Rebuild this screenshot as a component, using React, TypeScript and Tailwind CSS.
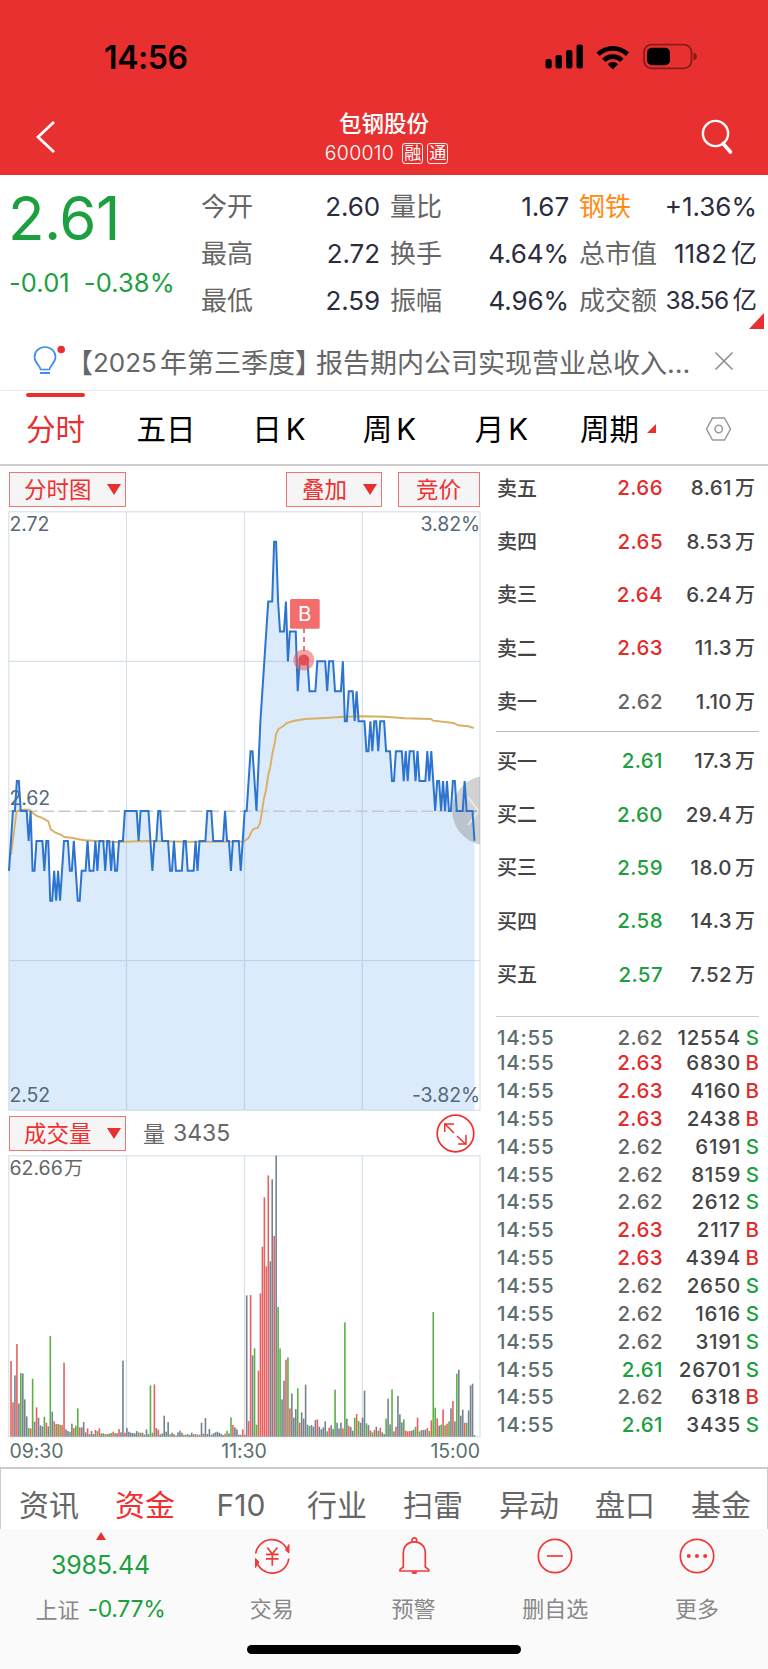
import React from "react";

const FONT =
  "font-[Inter,'Noto_Sans_CJK_SC',sans-serif]";

// price in ticks relative to yesterday's close (2.62), as [minute, ticks]
const PRICE: number[][] = [
  [0, -2], [2, 0], [3, 0], [4, 1], [5, 1], [6, 0], [9, 0], [10, -1], [11, 0], [12, -2],
  [13, -2], [14, -1], [17, -1], [18, -2], [19, -1], [20, -1], [21, -3], [22, -3], [23, -2], [24, -3],
  [25, -2], [26, -3], [28, -1], [30, -1], [31, -2], [32, -2], [33, -1], [35, -3], [36, -3], [37, -2],
  [39, -2], [40, -1], [41, -2], [43, -2], [44, -1], [45, -2], [46, -1], [48, -1], [49, -2], [50, -1],
  [51, -1], [52, -2], [53, -1], [54, -2], [55, -2], [56, -1], [58, -1], [59, 0], [65, 0], [66, -1],
  [67, 0], [71, 0], [73, -2], [74, -1], [75, -1], [76, 0], [77, 0], [78, -1], [81, -1], [82, -2],
  [83, -2], [84, -1], [85, -2], [88, -2], [89, -1], [90, -1], [91, -2], [94, -2], [95, -1], [96, -2],
  [97, -1], [100, -1], [101, 0], [103, 0], [104, -1], [109, -1], [110, 0], [111, -1], [112, -1], [113, -2],
  [114, -1], [117, -1], [118, -2], [120, 0], [121, 0], [123, 2], [124, 2], [126, 0], [128, 3], [130, 5],
  [132, 7], [134, 7], [135, 9], [136, 9], [137, 7], [138, 6], [140, 6], [141, 7], [142, 5], [143, 6],
  [146, 6], [147, 4], [148, 5], [152, 5], [153, 4], [156, 4], [157, 5], [161, 5], [162, 4], [163, 5],
  [165, 5], [166, 4], [169, 4], [170, 5], [171, 3], [172, 3], [173, 4], [175, 4], [176, 3], [177, 4],
  [178, 3], [181, 3], [182, 2], [183, 2], [184, 3], [185, 2], [186, 3], [187, 3], [188, 2], [189, 3],
  [191, 3], [192, 2], [194, 2], [195, 1], [196, 1], [197, 2], [200, 2], [201, 1], [202, 2], [203, 1],
  [204, 2], [206, 2], [207, 1], [208, 2], [209, 1], [212, 1], [213, 2], [214, 1], [215, 2], [217, 0],
  [218, 1], [219, 1], [220, 0], [221, 1], [222, 0], [223, 1], [224, 0], [225, 0], [226, 1], [227, 1],
  [228, 0], [231, 0], [232, 1], [233, 0], [236, 0], [237, -1],
];

const AVERAGE =
  "11,855 16.5,812 18.5,810.5 25,809.5 30,810 32.5,812.7 36.7,816 41.7,817.7 48.3,821.3 50.7,829.3 55,832.3 61.7,835 64.3,837 73.3,838 78.3,839.3 85,840.3 100,841.3 117,842 147,841 187,841.7 244,841.5 246.7,839.3 248.7,838 250.7,833.3 253.3,829 257.7,828 260,823.3 262,811.7 264,798.3 266,790 268.3,775 270.3,766.7 272.3,754 275,741.7 276,734.3 278.3,729.3 283.3,726 286.7,723 293.3,721 305,719 325,718 345,716.7 362,716.3 385,716.7 405,718.3 430.7,719 433.3,720.7 453.3,723 458.3,725.3 468.3,726.3 473.7,728";

// one bar per minute: r = up, g = down, k = flat
const VOLUME =
  "r227 r103 k184 r278 k100 g191 k190 k112 k61 g26 r25 g174 k45 r88 k57 k34 k31 g60 r42 k31 g302 k75 r46 g38 r38 g36 r35 r222 k22 k17 g14 k39 r26 g33 g85 r28 k28 k44 k13 r25 k8 k17 k8 r20 g17 r25 k10 k10 g8 r8 k9 g11 r15 g11 k10 r23 k13 k228 r12 k26 k15 k12 k11 k10 k17 g13 r12 k12 k6 k22 k8 g154 g12 r157 k26 r21 k7 g10 k63 k15 k44 g7 k12 r8 g4 k13 k18 k12 r6 g6 g8 k5 k12 k7 r8 g6 r6 k42 k9 k56 k8 k23 g6 k10 k13 k15 k12 k9 k5 r9 g18 k10 g58 r35 k28 k22 k6 g6 r22 r6 " +
  "k424 r47 r425 k244 g265 g36 r198 r430 r570 r718 r511 r784 k526 k772 r602 k843 g389 g265 k112 k168 r231 g238 r85 k130 k57 k83 g145 r42 k73 k54 k156 k36 g32 k35 k30 k50 r52 k30 k22 k28 k46 g16 r27 k34 k23 g141 k42 k25 k42 r25 g343 k54 r33 k29 k18 g57 r68 g47 k42 k57 k138 g40 k35 r19 g13 r20 k30 g18 r27 k13 k8 g54 k114 k37 g142 k16 r30 k122 k67 k43 g52 r18 r16 r17 k18 k21 g30 r57 g16 k20 k20 k21 r26 g17 r49 g374 g87 r55 k33 g36 r82 g34 r39 g46 k85 r107 k46 g189 k201 k63 k81 r42 g42 k79 k154 k159 g5";

const BAR_COLORS: Record<string, string> = {
  r: "#e8605f",
  g: "#5bb048",
  k: "#74838f",
};

const STATS = [
  ["今开", "2.60", "量比", "1.67", "钢铁", "+1.36%"],
  ["最高", "2.72", "换手", "4.64%", "总市值", "1182亿"],
  ["最低", "2.59", "振幅", "4.96%", "成交额", "38.56亿"],
];

const SELLS = [
  ["卖五", "2.66", "8.61万"],
  ["卖四", "2.65", "8.53万"],
  ["卖三", "2.64", "6.24万"],
  ["卖二", "2.63", "11.3万"],
  ["卖一", "2.62", "1.10万"],
];

const BUYS = [
  ["买一", "2.61", "17.3万"],
  ["买二", "2.60", "29.4万"],
  ["买三", "2.59", "18.0万"],
  ["买四", "2.58", "14.3万"],
  ["买五", "2.57", "7.52万"],
];

const TRADES = [
  ["2.62", "12554", "S"],
  ["2.63", "6830", "B"],
  ["2.63", "4160", "B"],
  ["2.63", "2438", "B"],
  ["2.62", "6191", "S"],
  ["2.62", "8159", "S"],
  ["2.62", "2612", "S"],
  ["2.63", "2117", "B"],
  ["2.63", "4394", "B"],
  ["2.62", "2650", "S"],
  ["2.62", "1616", "S"],
  ["2.62", "3191", "S"],
  ["2.61", "26701", "S"],
  ["2.62", "6318", "B"],
  ["2.61", "3435", "S"],
];

const priceColor = (price: string) => {
  if (price > "2.62") return "text-[#e32b2b]";
  if (price < "2.62") return "text-[#1c9f3f]";
  return "text-[#666]";
};

const withUnit = (value: string) => {
  const unit = value.slice(-1);
  if (unit !== "万" && unit !== "亿") return value;
  return (
    <>
      {value.slice(0, -1)}
      <span className="ml-[4px] tracking-normal">{unit}</span>
    </>
  );
};

const StatusBar = () => (
  <div className="flex h-[114px] items-center justify-between pl-[104px] pr-[70px]">
    <span className="mt-[2px] text-[32px] font-semibold leading-none tracking-[-0.4px] text-black">
      14:56
    </span>
    <svg width="154" height="28" viewBox="544 43 154 28" fill="#000">
      <rect x="545.5" y="59" width="6.2" height="9.5" rx="2" />
      <rect x="555.5" y="55" width="6.4" height="13.5" rx="2" />
      <rect x="566" y="50" width="6.4" height="18.5" rx="2" />
      <rect x="576.5" y="44.5" width="6.4" height="24" rx="2" />
      <path d="M596.5 52.5a23.6 23.6 0 0 1 32.6 0l-3.2 3.6a18.6 18.6 0 0 0-26.2 0z" />
      <path d="M602 58.7a15.6 15.6 0 0 1 21.6 0l-3.4 3.4a10.6 10.6 0 0 0-14.8 0z" />
      <path d="M607.6 64.2a7.5 7.5 0 0 1 10.4 0l-5.2 5z" />
      <rect x="644" y="44.7" width="47.5" height="23.6" rx="7.5" fill="none" stroke="#000" strokeOpacity=".42" strokeWidth="1.8" />
      <rect x="647" y="47.7" width="23" height="17.6" rx="5" />
      <path d="M693.6 52.5c4.4 1.6 4.4 6.4 0 8z" fillOpacity=".45" />
    </svg>
  </div>
);

const Header = () => (
  <header className="h-[175px] bg-[#e93030] text-white">
    <StatusBar />
    <div className="flex items-start justify-between pl-[34px] pr-[33px]">
      <svg className="mt-[6px]" width="24" height="34" viewBox="34 120 24 34" fill="none" stroke="#fff" strokeWidth="2.8">
        <path d="M54 122L38 137l16 15" />
      </svg>
      <div className="ml-[14px] flex flex-col items-center">
        <span className="mr-[5px] text-[22.5px] font-medium leading-[20px]">包钢股份</span>
        <span className="mt-[9px] flex h-[21px] items-center gap-1 text-[19.5px] leading-none">
          <span className="mr-[4px] font-[350] tracking-[0.3px]">600010</span>
          {["融", "通"].map((tag) => (
            <span
              key={tag}
              className="flex h-[21px] w-[21px] items-center justify-center rounded-[3px] border border-white/90 text-[17px] leading-none"
            >
              {tag}
            </span>
          ))}
        </span>
      </div>
      <svg className="mt-[5px]" width="34" height="36" viewBox="700 119 34 36" fill="none" stroke="#fff">
        <circle cx="714.5" cy="133.5" r="12.6" strokeWidth="2.4" />
        <path d="M722 143.5l7.5 8.5" strokeWidth="3.6" strokeLinecap="round" />
      </svg>
    </div>
  </header>
);

const Quote = () => (
  <section className="relative flex h-[157px] text-[26px] leading-none">
    <div className="w-[201px] pl-[9px] text-[#1c9f3f]">
      <div className="mt-[13px] -ml-px text-[60px] leading-[60px] tracking-[-0.5px]">2.61</div>
      <div className="mt-[22px] flex gap-[14px] text-[25.5px] tracking-[0.1px]">
        <span>-0.01</span>
        <span>-0.38%</span>
      </div>
    </div>
    <div className="flex w-[556px] flex-col pt-[8px]">
      {STATS.map((row) => (
        <div key={row[0]} className="flex h-[47px] items-center text-[#2b2d3f]">
          <span className="w-[52px] shrink-0 text-[#666]">{row[0]}</span>
          <span className="w-[127px] shrink-0 text-right tracking-[-0.1px]">{row[1]}</span>
          <span className="ml-[10px] w-[52px] shrink-0 text-[#666]">{row[2]}</span>
          <span className="w-[127px] shrink-0 text-right tracking-[-0.1px]">{row[3]}</span>
          <span
            className={`ml-[10px] shrink-0 ${row[4] === "钢铁" ? "text-[#ff8c14]" : "text-[#666]"}`}
          >
            {row[4]}
          </span>
          <span
            className={`flex-1 whitespace-nowrap text-right ${
              row[5] === "38.56亿" ? "text-[24.5px] tracking-[-0.7px]" : "tracking-[0px]"
            }`}
          >
            {withUnit(row[5])}
          </span>
        </div>
      ))}
    </div>
    <svg className="absolute right-[4px] top-[138px]" width="15" height="16" viewBox="0 0 15 16">
      <path d="M15 0v16H0z" fill="#e93030" />
    </svg>
  </section>
);

const News = () => (
  <section className="flex h-[59px] items-center border-b border-[#e8e8e8] pl-[32px] text-[27px] leading-none text-[#666]">
    <svg width="34" height="34" viewBox="32 345 34 34" fill="none" stroke="#3f8cf5" strokeWidth="1.7">
      <path d="M40.5 370.5c0-4-6-6-6-12.5a10.5 10 0 0 1 21 0c0 6.5-6 8.5-6 12.5z" />
      <path d="M40 374h10" strokeWidth="2" />
      <circle cx="61.2" cy="350.5" r="3.8" fill="#e93030" stroke="none" />
    </svg>
    <span className="mt-[4px] flex w-[624px] whitespace-nowrap">
      <span>【</span>
      <span className="text-[26px]">2025</span>
      <span className="ml-[3px]">年第三季度】</span>
      <span className="-ml-[6px]">报告期内公司实现营业总收入...</span>
    </span>
    <svg className="ml-[24px]" width="20" height="20" viewBox="0 0 20 20" stroke="#888" strokeWidth="1.5">
      <path d="M1.5 1.5l17 17M18.5 1.5l-17 17" />
    </svg>
  </section>
);

const PeriodTabs = () => (
  <nav className="flex h-[75px] border-b-2 border-[#ccc] text-[29.5px] leading-none text-black">
    <div className="flex w-[111px] flex-col items-center text-[#e93030]">
      <span className="mt-[2px] h-[4px] w-[59px] rounded-full bg-[#e93030]" />
      <span className="mt-[18px]">分时</span>
    </div>
    <span className="mt-[24px] w-[110px] text-center">五日</span>
    <span className="mt-[24px] w-[116px] text-center">日<span className="ml-[4px]">K</span></span>
    <span className="mt-[24px] w-[105px] text-center">周<span className="ml-[4px]">K</span></span>
    <span className="mt-[24px] w-[119px] text-center">月<span className="ml-[4px]">K</span></span>
    <span className="mt-[24px] ml-[19px] flex">
      周期
      <svg className="ml-[8px] mt-[9px]" width="9" height="9" viewBox="0 0 9 9">
        <path d="M9 0v9H0z" fill="#e93030" />
      </svg>
    </span>
    <svg className="ml-[49px] mt-[25px]" width="28" height="26" viewBox="0 0 28 26" fill="none" stroke="#999" strokeWidth="1.5">
      <path d="M7.5 2h12l6 11-6 11h-12L1.5 13z" />
      <circle cx="13.7" cy="13" r="3.7" />
    </svg>
  </nav>
);

interface BoxButtonProps {
  label: string;
  className: string;
  arrow?: boolean;
}

const BoxButton: React.FC<BoxButtonProps> = ({ label, className, arrow }) => (
  <button
    className={`flex h-[35px] items-center border border-[#f07676] bg-[#f5f5f5] text-[22.5px] leading-none text-[#f03030] ${className}`}
  >
    <span className="mt-[2px]">{label}</span>
    {arrow && (
      <svg className="ml-auto mr-[4px]" width="14" height="11" viewBox="0 0 14 11">
        <path d="M0 0h14L7 11z" fill="#e93030" />
      </svg>
    )}
  </button>
);

const minuteX = (minute: number) => 9 + minute * 1.964;
const tickY = (ticks: number) => 811 - ticks * 29.93;

const PriceChart = () => {
  const line = PRICE.map(([m, t]) => `${minuteX(m)},${tickY(t)}`).join(" ");
  return (
    <svg className="block" width="486" height="602" viewBox="0 510 486 602" fill="none">
      <g stroke="#d6e1ec" strokeWidth="1.2">
        <rect x="8.8" y="511.8" width="471.2" height="598.5" />
        <path d="M9 661.3h471M9 960.6h471M126.5 512v598M244.5 512v598M362.3 512v598" />
      </g>
      <polygon points={`9,1110 ${line} ${minuteX(237)},1110`} fill="#5aa2ee" fillOpacity=".22" />
      <path d="M9 811.2h471" stroke="#c6c8cc" strokeWidth="1.5" strokeDasharray="12 4.5" />
      <g fill="#566878" fontSize="19.5" letterSpacing="-.1">
        <text x="9.5" y="530.5">2.72</text>
        <text x="9.5" y="804.5">2.62</text>
        <text x="9.5" y="1101.5">2.52</text>
        <text x="480" y="530.5" textAnchor="end">3.82%</text>
        <text x="480" y="1101.5" textAnchor="end">-3.82%</text>
      </g>
      <polyline points={AVERAGE} stroke="#d9b063" strokeWidth="1.9" />
      <path d="M480 776.5a34.7 34.7 0 0 0 0 68z" fill="#777" fillOpacity=".33" />
      <path d="M468 797l10.5 14-10.5 14" stroke="#fff" strokeOpacity=".55" strokeWidth="2" />
      <polyline points={line} stroke="#2c74cf" strokeWidth="2" />
      <path d="M304 628v24" stroke="#e14a50" strokeWidth="1.5" strokeDasharray="5 4" />
      <circle cx="303.8" cy="660" r="10.5" fill="#e8575c" fillOpacity=".55" />
      <circle cx="303.8" cy="660" r="5.5" fill="#df5054" />
      <rect x="290" y="599" width="29.7" height="29.7" rx="1.5" fill="#f36d6d" />
      <text x="304.8" y="621" textAnchor="middle" fontSize="20.5" fill="#fff">B</text>
    </svg>
  );
};

const VolumeChart = () => (
  <svg className="block" width="486" height="313" viewBox="0 1154 486 313" fill="none">
    <g stroke="#d6e1ec" strokeWidth="1.2">
      <rect x="8.8" y="1155.8" width="471.2" height="281" />
      <path d="M126.5 1156v281M244.5 1156v281M362.3 1156v281" />
    </g>
    {VOLUME.split(" ").map((bar, i) => {
      const h = Number(bar.slice(1)) / 3;
      return (
        <rect
          key={i}
          x={minuteX(i + 1) - 0.75}
          y={1436.7 - h}
          width="1.6"
          height={h}
          fill={BAR_COLORS[bar[0]]}
        />
      );
    })}
    <g fontSize="19.5" fill="#666">
      <text x="9.5" y="1174.5">62.66</text>
      <text x="64" y="1174.5" fontSize="19">万</text>
      <g fill="#5a6e6e" letterSpacing="-.1">
        <text x="9.5" y="1458">09:30</text>
        <text x="244" y="1458" textAnchor="middle">11:30</text>
        <text x="480" y="1458" textAnchor="end">15:00</text>
      </g>
    </g>
  </svg>
);

const ChartPanel = () => (
  <div className="w-[486px]">
    <div className="flex h-[44px] pl-[9px] pt-[6px]">
      <BoxButton label="分时图" className="w-[117px] pl-[14px]" arrow />
      <BoxButton label="叠加" className="ml-[160px] w-[96px] pl-[15px]" arrow />
      <BoxButton label="竞价" className="ml-[16px] w-[82px] pl-[17px]" />
    </div>
    <PriceChart />
    <div className="flex h-[42px] items-center pl-[9px]">
      <BoxButton label="成交量" className="w-[117px] pl-[14px]" arrow />
      <span className="ml-[17px] mt-[2px] text-[22px] leading-none text-[#666]">量</span>
      <span className="ml-[8px] mt-px text-[23px] leading-none text-[#666]">3435</span>
      <svg className="ml-auto mr-[11px]" width="39" height="39" viewBox="0 0 39 39" fill="none" stroke="#ee3030">
        <circle cx="19.5" cy="19.5" r="18.3" strokeWidth="1.7" />
        <path d="M18 19L9 10M8.7 18v-8H18M21 22l9 8.5M22 30h8v-9" strokeWidth="1.5" />
      </svg>
    </div>
    <VolumeChart />
  </div>
);

const OrderRows: React.FC<{ rows: string[][] }> = ({ rows }) => (
  <>
    {rows.map(([label, price, amount]) => (
      <div key={label} className="flex h-[53.3px] items-center font-medium text-[#444]">
        <span className="w-[60px] pl-px text-[20px]">{label}</span>
        <span className={`w-[107px] text-right tracking-[0.4px] ${priceColor(price)}`}>
          {price}
        </span>
        <span className="w-[92px] text-right tracking-[0.4px]">
          {amount.slice(0, -1)}
          <span className="ml-[3px] text-[20px] tracking-normal">万</span>
        </span>
      </div>
    ))}
  </>
);

const OrderBook = () => (
  <aside className="-mt-[4px] ml-[10px] w-[263px] text-[20.5px] leading-none">
    <div className="h-[270px] border-b border-[#bbb]">
      <OrderRows rows={SELLS} />
    </div>
    <div className="h-[285px] border-b border-[#ccc] pt-[3px]">
      <OrderRows rows={BUYS} />
    </div>
    <div className="pt-[10px]">
      {TRADES.map(([price, volume, side], i) => (
        <div
          key={i}
          className={`flex items-center font-medium ${i === 0 ? "h-[22.5px]" : "h-[27.86px]"}`}
        >
          <span className="w-[60px] pl-px tracking-[0.8px] text-[#5a6e6e]">14:55</span>
          <span className={`w-[107px] text-right tracking-[0.4px] ${priceColor(price)}`}>
            {price}
          </span>
          <span className="w-[78px] text-right tracking-[0.7px] text-[#444]">{volume}</span>
          <span
            className={`flex-1 text-right ${side === "B" ? "text-[#e32b2b]" : "text-[#1c9f3f]"}`}
          >
            {side}
          </span>
        </div>
      ))}
    </div>
  </aside>
);

const InfoTabs = () => (
  <nav className="flex h-[62px] items-center border-x border-t-2 border-[#ccc] pt-[12px] text-[30px] leading-none text-[#666]">
    {["资讯", "资金", "F10", "行业", "扫雷", "异动", "盘口", "基金"].map((tab) => (
      <span
        key={tab}
        className={`w-[96px] shrink-0 text-center ${tab === "资金" ? "text-[#f03030]" : ""}`}
      >
        {tab}
      </span>
    ))}
  </nav>
);

const ACTIONS = [
  {
    label: "交易",
    icon: (
      <>
        <path d="M3.6 17.5A16.600 16.600 0 0 1 36 16" />
        <path d="M36.800 22.500A16.600 16.600 0 0 1 4.200 24.500" />
        <path d="M37 8.500v8.500l-3.500-3zM3.500 31.500V22.500l3.500 3.500z" fill="#f03a3a" strokeWidth="1" />
        <path d="M15.300 11.500l5 6.500 5-6.500M20.300 18v11.700M14 18.300h12.600M14 22.800h12.600" />
      </>
    ),
  },
  {
    label: "预警",
    icon: (
      <>
        <path d="M9.300 31V17C9.300 10 14 5.800 20.300 5.800S31.300 10 31.300 17v14l3.400 2.600V35H6v-1.400z" />
        <path d="M18 5.800V4.200a2.300 2.300 0 0 1 4.600 0v1.600" />
        <path d="M17.500 35.500h5.800a2.900 2.600 0 0 1-5.800 0z" fill="#f03a3a" stroke="none" />
      </>
    ),
  },
  {
    label: "删自选",
    icon: (
      <>
        <circle cx="20" cy="20" r="16.7" />
        <path d="M12 20h16" />
      </>
    ),
  },
  {
    label: "更多",
    icon: (
      <>
        <circle cx="20" cy="20" r="16.7" />
        <g fill="#f03a3a" stroke="none">
          <circle cx="11.8" cy="20" r="2" />
          <circle cx="20" cy="20" r="2" />
          <circle cx="28.2" cy="20" r="2" />
        </g>
      </>
    ),
  },
];

const BottomBar = () => (
  <footer className="h-[140px] bg-[#fafafa] pt-px text-[22px] leading-none text-[#888]">
    <div className="flex h-[115px]">
      <div className="flex w-[201px] flex-col items-center text-[#1c9f3f]">
        <svg className="mt-[2px]" width="10" height="8" viewBox="0 0 10 8">
          <path d="M5 0l5 8H0z" fill="#e93030" />
        </svg>
        <span className="mt-[13px] text-[25px] tracking-[-0.2px]">3985.44</span>
        <span className="mt-[20px] flex items-center">
          <span className="mr-[8px] text-[#888]">上证</span>
          <span className="text-[23px] tracking-[-0.3px]">-0.77%</span>
        </span>
      </div>
      {ACTIONS.map(({ label, icon }) => (
        <div key={label} className="flex w-[141.7px] flex-col items-center">
          <svg className="mt-[6px]" width="40" height="40" viewBox="0 0 40 40" fill="none" stroke="#f03a3a" strokeWidth="1.7">
            {icon}
          </svg>
          <span className="mt-[22px]">{label}</span>
        </div>
      ))}
    </div>
    <div className="mx-auto h-[9px] w-[274px] rounded-full bg-black" />
  </footer>
);

const App = () => {
  return (
    <div className={`flex h-[1669px] w-[768px] flex-col overflow-hidden bg-white ${FONT}`}>
      <Header />
      <Quote />
      <News />
      <PeriodTabs />
      <main className="flex h-[1001px]">
        <ChartPanel />
        <OrderBook />
      </main>
      <InfoTabs />
      <BottomBar />
    </div>
  );
};

export default App;
